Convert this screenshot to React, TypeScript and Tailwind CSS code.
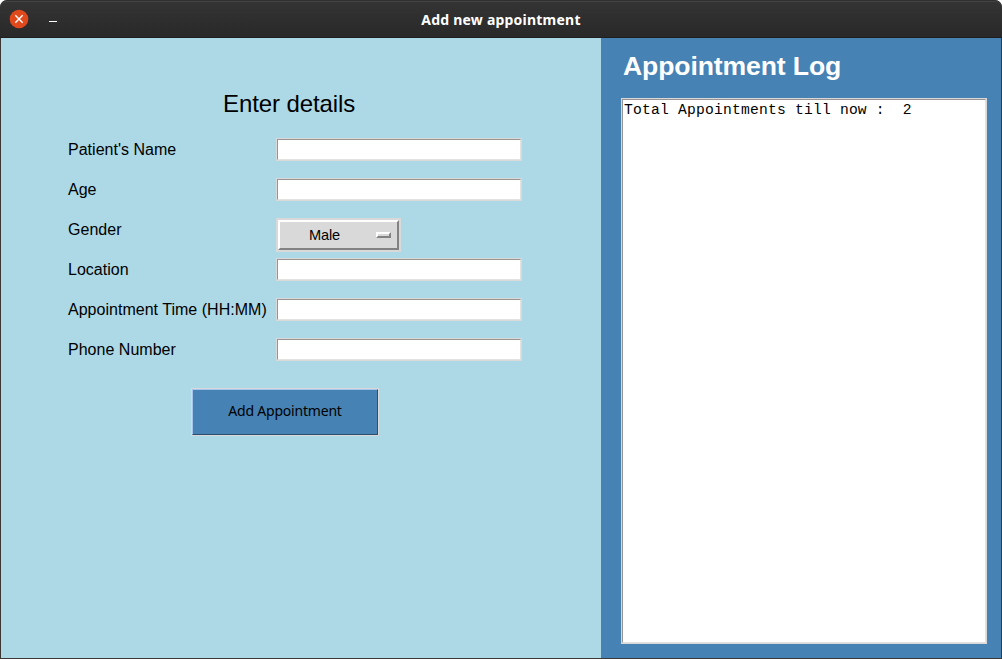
import { useState } from "react";

const bevelEntry =
  "block h-[23px] w-[246px] border border-[#d9d9d9] bg-white";

function Entry({ label }: { label: string }) {
  return (
    <div className={bevelEntry}>
      <input
        aria-label={label}
        className="block h-[21px] w-full border border-t-[#999391] border-l-[#999391] border-r-[#e4e2e0] border-b-[#e4e2e0] bg-white px-0.5 text-sm outline-none"
      />
    </div>
  );
}

function GenderMenu() {
  const [gender, setGender] = useState("Male");
  return (
    <button
      onClick={() => setGender(gender === "Male" ? "Female" : "Male")}
      className="block h-[34px] w-[125px] border-2 border-[#d9d9d9] text-black"
    >
      <span className="flex h-[30px] items-center justify-between border-2 border-t-white border-l-white border-r-[#828282] border-b-[#828282] bg-[#d9d9d9] pr-1.5 pl-[29px]">
        <span className="text-[14.6px] leading-none tracking-[-0.15px]">{gender}</span>
        <span className="h-1.5 w-[15px] border-2 border-t-white border-l-white border-r-[#828282] border-b-[#828282] bg-[#d9d9d9]" />
      </span>
    </button>
  );
}

const fields = [
  "Patient's Name",
  "Age",
  "Gender",
  "Location",
  "Appointment Time (HH:MM)",
  "Phone Number",
];

function TitleBar() {
  return (
    <header className="grid h-[38px] shrink-0 grid-cols-[1fr_auto_1fr] items-center rounded-t-[7px] border-t border-b border-t-[#303030] border-b-[#1e1e1e] bg-linear-to-b from-[#343434] to-[#292929] shadow-[inset_0_1px_0_#444444]">
      <div className="flex h-9 items-center pl-[9px]">
        <button aria-label="Close" className="block size-5">
          <svg viewBox="0 0 20 20" className="size-5">
            <circle cx="10" cy="10" r="9.3" fill="#e0491b" />
            <path d="M6.3 6.3 13.7 13.7M13.7 6.3 6.3 13.7" stroke="#fff" strokeWidth="1.4" />
          </svg>
        </button>
        <button aria-label="Minimize" className="ml-5 flex h-[5px] w-2 items-end">
          <span className="h-px w-2 bg-white" />
        </button>
      </div>
      <h1 className="pt-0.5 font-['Noto_Sans','Open_Sans',sans-serif] text-[14px] leading-none font-bold tracking-[0.22px] text-white">
        Add new appointment
      </h1>
    </header>
  );
}

export default function App() {
  return (
    <div className="h-[659px] w-[1002px] bg-white font-['Liberation_Sans',Arial,sans-serif]">
      <div className="flex h-full flex-col overflow-hidden rounded-t-[7px] bg-[#3c3836]">
        <TitleBar />
        <div className="mx-px mb-px flex min-h-0 flex-1">
          <main className="w-[600px] bg-[#add8e6] pl-[67px] text-black">
            <h2 className="pt-[52px] pl-[155px] text-[24px] leading-7 tracking-[-0.1px]">Enter details</h2>
            <div className="mt-5">
              {fields.map((label) => (
                <div key={label} className="flex h-10 items-start">
                  <span className="w-52 shrink-0 pt-[3px] text-[16px] leading-[18px] tracking-[0.02px]">{label}</span>
                  {label === "Gender" ? <GenderMenu /> : <Entry label={label} />}
                </div>
              ))}
            </div>
            <button className="mt-2.5 ml-[123px] block h-12 w-[188px] border border-[#d9d9d9]">
              <span className="flex h-[46px] items-center justify-center border border-t-[#a5c5ee] border-l-[#a5c5ee] border-r-[#2c4d6d] border-b-[#2c4d6d] bg-[#4682b4] pb-[3px] font-['Noto_Sans','Open_Sans',sans-serif] text-[14px] tracking-[-0.2px]">
                Add Appointment
              </span>
            </button>
          </main>
          <aside className="flex-1 bg-[#4682b4] pl-5">
            <h2 className="h-[60px] pt-3 pl-0.5 text-[26.6px] leading-8 font-bold tracking-[-0.13px] text-white">
              Appointment Log
            </h2>
            <div className="h-[546px] w-[366px] border border-[#d9d9d9]">
              <div className="h-full border border-t-[#999391] border-l-[#999391] border-r-[#e4e2e0] border-b-[#e4e2e0] bg-white pt-0.5 pl-px font-['Liberation_Mono','Courier_New',monospace] text-[14.67px] leading-[17px] tracking-[0.2px] whitespace-pre text-black">
                {"Total Appointments till now :  2"}
              </div>
            </div>
          </aside>
        </div>
      </div>
    </div>
  );
}
